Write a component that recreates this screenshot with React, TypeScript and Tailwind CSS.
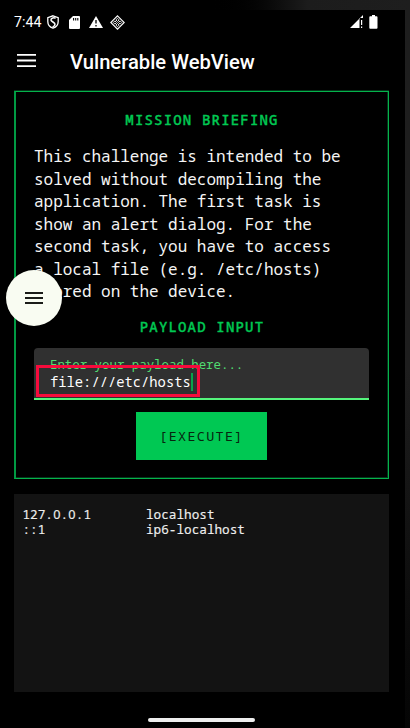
import React from "react";

const mono = "font-['Noto_Sans_Mono','Droid_Sans_Mono','DejaVu_Sans_Mono',monospace]";

const briefing = [
  "This challenge is intended to be",
  "solved without decompiling the",
  "application. The first task is",
  "show an alert dialog. For the",
  "second task, you have to access",
  "a local file (e.g. /etc/hosts)",
  "stored on the device.",
];

function StatusBar() {
  return (
    <div className="flex h-[24px] items-center pl-[14px] pr-[27px] text-white">
      <span className="w-[32px] whitespace-nowrap font-[Roboto,sans-serif] text-[14.2px] leading-[22px]">7:44</span>
      <svg className="ml-px" width="12" height="14" viewBox="0 0 12 14" fill="none" stroke="white" strokeWidth="1.3">
        <path d="M6 .8 11.2 2.7v3.8c0 3-2 5.6-5.2 6.7-3.2-1.1-5.2-3.7-5.2-6.7V2.7Z" />
        <path d="M8.6 3.2C6 2.2 3.6 3.6 4 5.2 4.4 6.8 8 7.4 8 9.2 8 10.6 6.6 11.6 5.6 12" strokeWidth="1.5" />
      </svg>
      <svg className="ml-[10px]" width="11" height="13" viewBox="0 0 11 13">
        <path d="M4 0h6q1 0 1 1v11q0 1-1 1H1q-1 0-1-1V4Z" fill="white" />
        <path d="M4.6 2v2.4M6.7 2v2.4M8.8 2v2.4" stroke="black" strokeWidth="1.1" />
      </svg>
      <svg className="ml-[9px]" width="14" height="12" viewBox="0 0 14 12">
        <path d="M7 0 14 12H0Z" fill="white" />
        <path d="M7 4v3.6M7 9v1.4" stroke="black" strokeWidth="1.3" />
      </svg>
      <svg className="ml-[7px]" width="15" height="15" viewBox="0 0 15 15" fill="none" stroke="white">
        <path d="m7.5.8 6.7 6.7-6.7 6.7L.8 7.5Z" strokeWidth="1.1" />
        <path d="m7.5 3.3 1.6 1.6-1.6 1.6-1.6-1.6ZM10.1 5.9l1.6 1.6-1.6 1.6-1.6-1.6ZM4.9 5.9l1.6 1.6-1.6 1.6-1.6-1.6ZM7.5 8.5l1.6 1.6-1.6 1.6-1.6-1.6Z" strokeWidth="0.9" />
      </svg>
      <svg className="-mt-px ml-auto" width="13" height="13" viewBox="0 0 13 13" fill="white">
        <path d="M0 13 10 3v10ZM10 3 13 0v3Z" />
        <path d="M9.5 4h1v9h-1Z" fill="black" />
        <path d="M11 5h1.2v5H11ZM11 11.5h1.2V13H11Z" />
      </svg>
      <svg className="-mt-px ml-[6px]" width="9" height="14" viewBox="0 0 9 14" fill="white">
        <path d="M3 0h3v1.3h1.6q.9 0 .9.9v10.6q0 .9-.9.9H1.2q-.9 0-.9-.9V2.2q0-.9.9-.9H3Z" />
      </svg>
    </div>
  );
}

/* Noto Sans Mono slashes its zero; this one is open and keeps the mono advance. */
function Zero() {
  return <span className="inline-block w-[0.6em] text-center font-['Noto_Sans',sans-serif] leading-none">0</span>;
}

export default function App() {
  return (
    <div className="relative flex h-[728px] w-[410px] flex-col overflow-hidden bg-black">
      <div className="h-[10px] shrink-0 bg-linear-to-r from-black from-50% via-[#1c1c1c] via-75% to-[#1e1e1e]" />
      <div className="flex min-h-0 flex-1">
        <div className="flex w-[405px] flex-col">
          <StatusBar />
          <header className="flex h-[56px] items-center pl-[17px]">
            <svg className="-mt-[3px]" width="19" height="13" viewBox="0 0 19 13" fill="white">
              <path d="M0 0h19v1.8H0ZM0 5.6h19v1.8H0ZM0 11.2h19V13H0Z" />
            </svg>
            <h1 className="ml-[34px] whitespace-nowrap font-[Roboto,sans-serif] text-[20.2px] font-medium leading-[24px] text-white">
              Vulnerable WebView
            </h1>
          </header>

          <section className="ml-[14px] mt-px flex h-[388px] w-[375px] shrink-0 flex-col items-center border border-l-2 border-[#04b34b] border-l-[#009a43] shadow-[inset_-1px_-1px_0_#04351a,0_-1px_0_#04351a]">
            <h2 className={`${mono} mt-[18px] h-[20px] whitespace-nowrap text-[14px] font-medium leading-[20px] tracking-[1.18px] text-[#00c853] [-webkit-text-stroke:0.35px_#00c853]`}>
              MISSION BRIEFING
            </h2>
            <div className={`${mono} mt-[15px] w-full pl-[18px] text-[16px] leading-[22.5px] tracking-[-0.02px] text-[#f5f5f5]`}>
              {briefing.map((line) => (
                <div key={line} className="whitespace-pre">{line}</div>
              ))}
            </div>
            <h2 className={`${mono} mt-[14.5px] h-[20px] whitespace-nowrap text-[14px] font-medium leading-[20px] tracking-[1.18px] text-[#00c853] [-webkit-text-stroke:0.35px_#00c853]`}>
              PAYLOAD INPUT
            </h2>
            <div className="relative mr-px mt-[11px] h-[52px] w-[335px] shrink-0 rounded-t-[4px] border-b-2 border-[#55f47c] bg-[#303030] pl-[16px] pt-[8px]">
              <div className={`${mono} h-[17px] whitespace-pre text-[12.4px] leading-[18px] text-[#50dd70]`}>
                Enter your payload here...
              </div>
              <div className="flex h-[17px] items-center">
                <span className={`${mono} whitespace-pre text-[13.8px] leading-[17px] text-white`}>file:///etc/hosts</span>
                <span className="h-[18px] w-[2px] bg-[#0aa34a]" />
              </div>
              <div className="absolute left-[2px] top-[17px] h-[32px] w-[164px] border-3 border-[#f70b3c]" />
            </div>
            <button className={`${mono} mr-px mt-[12px] h-[48px] w-[131px] shrink-0 bg-[#00c853] text-[13.4px] leading-[47px] tracking-[1.35px] text-[#07250f]`}>
              [EXECUTE]
            </button>
          </section>

          <section className={`${mono} ml-[14px] mt-[15px] flex h-[198px] w-[375px] shrink-0 bg-[#131313] pl-[8.5px] pt-[13px] text-[12.7px] leading-[15px] text-[#eeeeee] [-webkit-text-stroke:0.15px_#eeeeee]`}>
            <div className="w-[123.5px]">
              <div className="h-[15px]">127.<Zero />.<Zero />.1</div>
              <div>::1</div>
            </div>
            <div>
              <div>localhost</div>
              <div>ip6-localhost</div>
            </div>
          </section>
          <div className="ml-[148px] mt-[26px] h-[4px] w-[107px] rounded-full bg-[#eeeeee]" />
        </div>
        <div className="w-[5px] bg-linear-to-b from-[#1e1e1e] from-50% to-[#050505]" />
      </div>

      <button aria-label="Menu" className="absolute left-[6px] top-[270px] flex h-[56px] w-[56px] items-center justify-center rounded-full bg-[#f9fcf2]">
        <svg width="18" height="12" viewBox="0 0 18 12" fill="#1b1c19">
          <path d="M0 0h18v2H0ZM0 5h18v2H0ZM0 10h18v2H0Z" />
        </svg>
      </button>
    </div>
  );
}
